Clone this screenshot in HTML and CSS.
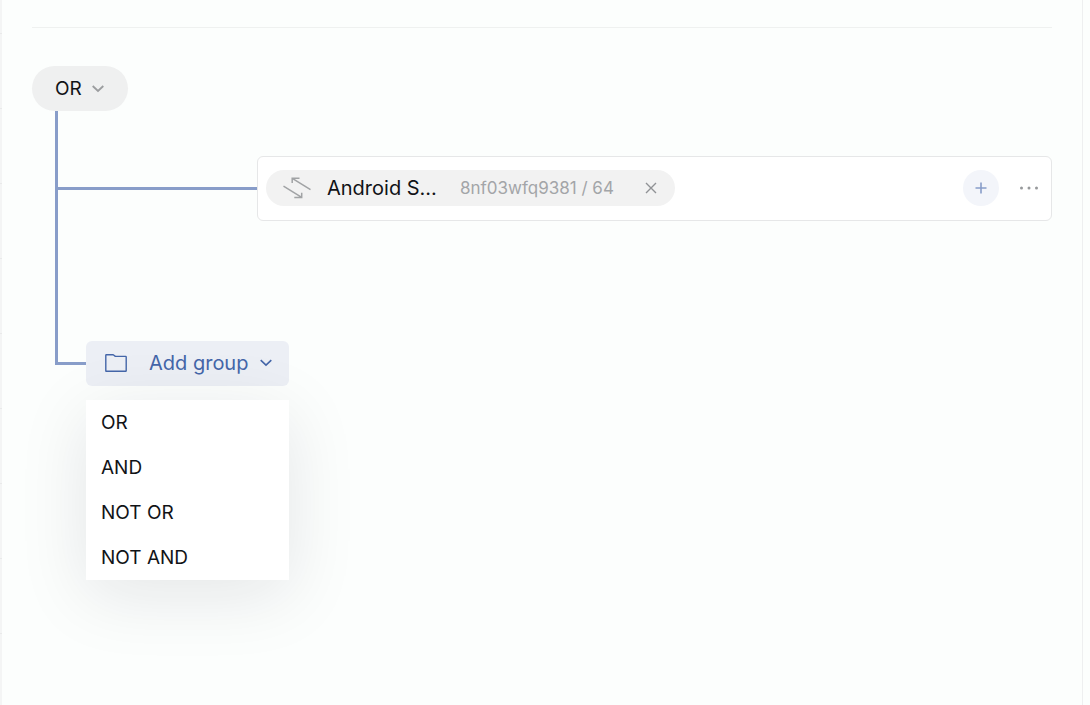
FILE: index.html
```html
<!DOCTYPE html>
<html lang="en">
<head>
<meta charset="utf-8">
<title>Segment builder</title>
<link rel="stylesheet" href="styles.css">
</head>
<body>
<div class="page">
  <div class="gutter"></div>
  <main class="panel">
    <hr class="divider">
    <div class="operator">
      <select class="operator-select" aria-label="Group operator">
        <option>OR</option>
        <option>AND</option>
        <option>NOT OR</option>
        <option>NOT AND</option>
      </select>
      <svg class="operator-chevron" width="12" height="8" viewBox="0 0 12 8" fill="none" stroke="currentColor" stroke-width="1.8"><path d="M.7 1 6 6l5.300-5"/></svg>
    </div>
    <div class="tree">
      <div class="branch">
        <div class="stem"><div class="arm"></div></div>
        <section class="card">
          <div class="chip">
            <svg class="chip-icon" width="28" height="22" viewBox="0 0 28 22" fill="none" stroke="currentColor" stroke-width="1.5"><path d="M27.500 12.700 9.300 1.400M9.200 6V1.300h7.300M.5 9.200l18.200 11.200M11.300 20.600h7.400v-4.800"/></svg>
            <span class="chip-name">Android S...</span>
            <span class="chip-meta">8nf03wfq9381 / 64</span>
            <button class="chip-remove" type="button" aria-label="Remove">
              <svg width="12" height="12" viewBox="0 0 12 12" fill="none" stroke="currentColor" stroke-width="1.4"><path d="m1 1 10 10M11 1 1 11"/></svg>
            </button>
          </div>
          <div class="actions">
            <button class="add" type="button" aria-label="Add condition">
              <svg width="12" height="12" viewBox="0 0 12 12" fill="none" stroke="currentColor" stroke-width="1.6"><path d="M6 .5v11M.5 6h11"/></svg>
            </button>
            <button class="more" type="button" aria-label="More options">
              <svg width="20" height="4" viewBox="0 0 20 4" fill="currentColor"><circle cx="2.500" cy="2" r="1.500"/><circle cx="10" cy="2" r="1.500"/><circle cx="17.500" cy="2" r="1.500"/></svg>
            </button>
          </div>
        </section>
      </div>
      <div class="branch">
        <div class="elbow"></div>
        <div class="group">
          <button class="group-button" type="button" aria-haspopup="menu" aria-expanded="true" aria-controls="group-menu">
            <svg width="22" height="18" viewBox="0 0 22 18" fill="none" stroke="currentColor" stroke-width="1.400" stroke-linejoin="round"><path d="M.8 1.200Q.8.700 1.300.7h6.900l2.200 1.700h10.300q.5 0 .5.500v13.900q0 .5-.5.500H1.300q-.5 0-.5-.5z"/></svg>
            <span class="group-label">Add group</span>
            <svg width="12" height="8" viewBox="0 0 12 8" fill="none" stroke="currentColor" stroke-width="1.600"><path d="M.7 1.200 6 6.200l5.300-5"/></svg>
          </button>
          <div class="menu" id="group-menu" role="menu">
            <button class="menu-item" type="button" role="menuitem">OR</button>
            <button class="menu-item" type="button" role="menuitem">AND</button>
            <button class="menu-item" type="button" role="menuitem">NOT OR</button>
            <button class="menu-item" type="button" role="menuitem">NOT AND</button>
          </div>
        </div>
      </div>
    </div>
  </main>
  <div class="outer"></div>
</div>
</body>
</html>
```
FILE: styles.css
```css
* { box-sizing: border-box; }

body {
  margin: 0;
  background: #fcfefd;
  color: #111317;
  font-family: Inter, "Liberation Sans", sans-serif;
  font-size: 19px;
  font-weight: 400;
  line-height: 24px;
}

button, select {
  margin: 0;
  padding: 0;
  border: 0;
  background: none;
  color: inherit;
  font: inherit;
  cursor: pointer;
}

svg { display: block; flex: none; }

.page {
  display: grid;
  grid-template-columns: 2px 1fr 7px;
  min-height: 100vh;
}

.gutter {
  background: repeating-linear-gradient(#f4f5f5 0 33px, #e9eaea 33px 34px, #f4f5f5 34px 75px);
}

.panel {
  padding: 27px 30px 0;
  border-right: 1px solid #eeeff0;
}

.divider {
  margin: 0 0 38px;
  border: 0;
  border-top: 1px solid #eff1f0;
}

.operator {
  display: grid;
  grid-template-columns: 1fr;
  width: 96px;
  height: 45px;
}

.operator-select {
  grid-area: 1 / 1;
  width: 100%;
  min-width: 0;
  padding: 0 0 0 23px;
  border-radius: 23px;
  background: #eff0f0;
  appearance: none;
}

.operator-chevron {
  grid-area: 1 / 1;
  place-self: center end;
  margin-right: 24px;
  color: #9b9d9f;
  pointer-events: none;
}

.tree { padding-left: 23px; }

.branch { display: flex; }

.stem {
  display: flex;
  align-items: center;
  width: 202px;
  border-left: 3px solid #889dc9;
}

.arm {
  flex: 1;
  height: 3px;
  background: #889dc9;
}

.card {
  display: flex;
  flex: 1;
  align-items: flex-start;
  justify-content: space-between;
  min-height: 65px;
  margin: 45px 0;
  padding: 13px 8px;
  border: 1px solid #e6e7e8;
  border-radius: 6px;
  background: #fff;
}

.chip {
  display: flex;
  align-items: center;
  height: 36px;
  padding: 0 12px 0 17px;
  border-radius: 18px;
  background: #f2f2f2;
}

.chip-icon { color: #a1a3a5; }

.chip-name {
  width: 149px;
  padding-left: 16px;
  font-size: 20px;
}

.chip-meta {
  width: 154px;
  color: #a3a5a8;
  font-size: 17px;
  white-space: nowrap;
}

.chip-remove {
  display: grid;
  place-items: center;
  width: 24px;
  height: 24px;
  margin-left: 25px;
  color: #909295;
}

.actions {
  display: flex;
  align-items: center;
  gap: 16px;
}

.add {
  display: grid;
  place-items: center;
  width: 36px;
  height: 36px;
  border-radius: 50%;
  background: #f3f5fa;
  color: #889dc9;
}

.more {
  display: grid;
  place-items: center;
  width: 28px;
  height: 36px;
  color: #97999b;
}

.elbow {
  width: 31px;
  height: 99px;
  border: solid #889dc9;
  border-width: 0 0 3px 3px;
}

.group {
  position: relative;
  margin-top: 75px;
}

.group-button {
  display: flex;
  align-items: center;
  width: 203px;
  height: 45px;
  padding: 0 17px 2px 19px;
  border-radius: 6px;
  background: #eceff5;
  color: #4466a9;
  font-size: 20px;
}

.group-label {
  flex: 1;
  padding-left: 22px;
  text-align: left;
}

.menu {
  position: absolute;
  top: 59px;
  left: 0;
  display: grid;
  width: 203px;
  background: #fff;
  box-shadow: 0 15px 70px rgba(20, 20, 40, 0.1);
}

.menu-item {
  height: 45px;
  padding: 0 15px;
  text-align: left;
}
```
